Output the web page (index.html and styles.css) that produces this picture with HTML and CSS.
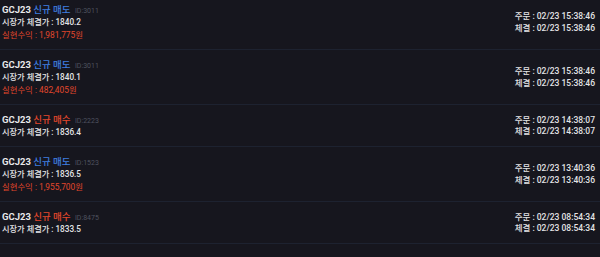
FILE: index.html
```html
<!DOCTYPE html>
<html lang="ko">
<head>
<meta charset="utf-8">
<link rel="stylesheet" href="styles.css">
</head>
<body>
<ul class="orders">
  <li class="order">
    <div class="info">
      <div class="title"><span class="sym">GCJ23</span> <span class="side sell">신규 매도</span> <span class="oid">ID:3011</span></div>
      <div class="line">시장가 체결가 : 1840.2</div>
      <div class="line pnl">실현수익 : 1,981,775원</div>
    </div>
    <div class="times"><div>주문 : 02/23 15:38:46</div><div>체결 : 02/23 15:38:46</div></div>
  </li>
  <li class="order">
    <div class="info">
      <div class="title"><span class="sym">GCJ23</span> <span class="side sell">신규 매도</span> <span class="oid">ID:3011</span></div>
      <div class="line">시장가 체결가 : 1840.1</div>
      <div class="line pnl">실현수익 : 482,405원</div>
    </div>
    <div class="times"><div>주문 : 02/23 15:38:46</div><div>체결 : 02/23 15:38:46</div></div>
  </li>
  <li class="order">
    <div class="info">
      <div class="title"><span class="sym">GCJ23</span> <span class="side buy">신규 매수</span> <span class="oid">ID:2223</span></div>
      <div class="line">시장가 체결가 : 1836.4</div>
    </div>
    <div class="times"><div>주문 : 02/23 14:38:07</div><div>체결 : 02/23 14:38:07</div></div>
  </li>
  <li class="order">
    <div class="info">
      <div class="title"><span class="sym">GCJ23</span> <span class="side sell">신규 매도</span> <span class="oid">ID:1523</span></div>
      <div class="line">시장가 체결가 : 1836.5</div>
      <div class="line pnl">실현수익 : 1,955,700원</div>
    </div>
    <div class="times"><div>주문 : 02/23 13:40:36</div><div>체결 : 02/23 13:40:36</div></div>
  </li>
  <li class="order">
    <div class="info">
      <div class="title"><span class="sym">GCJ23</span> <span class="side buy">신규 매수</span> <span class="oid">ID:8475</span></div>
      <div class="line">시장가 체결가 : 1833.5</div>
    </div>
    <div class="times"><div>주문 : 02/23 08:54:34</div><div>체결 : 02/23 08:54:34</div></div>
  </li>
</ul>
</body>
</html>
```
FILE: styles.css
```css
html, body {
  margin: 0;
  padding: 0;
  background: #16161e;
}
body {
  font-family: Roboto, "Noto Sans CJK KR", sans-serif;
  color: #e4e4e6;
  font-size: 8px;
}
.orders {
  list-style: none;
  margin: 0;
  padding: 0;
}
.order {
  display: flex;
  justify-content: space-between;
  align-items: center;
  padding: 8px 5px 7px 2px;
  border-bottom: 1px solid #1d2230;
}
.order:first-child {
  padding-top: 3px;
}
.info, .times {
  display: flex;
  flex-direction: column;
}
.title {
  height: 13px;
  line-height: 13px;
  font-size: 9.5px;
  white-space: nowrap;
}
.sym {
  font-weight: 700;
  color: #e8e8ea;
}
.side {
  font-weight: 500;
}
.sell { color: #3f7fe0; }
.buy { color: #e2472c; }
.oid {
  font-size: 7px;
  line-height: 1;
  color: #4e525e;
  margin-left: 2px;
}
.line {
  height: 13px;
  line-height: 13px;
  font-size: 8.2px;
  font-weight: 500;
}
.pnl {
  font-size: 8.4px;
  color: #e2472c;
  font-weight: 400;
}
.times {
  font-size: 8.5px;
  line-height: 11.5px;
  text-align: right;
  font-weight: 500;
}
```
